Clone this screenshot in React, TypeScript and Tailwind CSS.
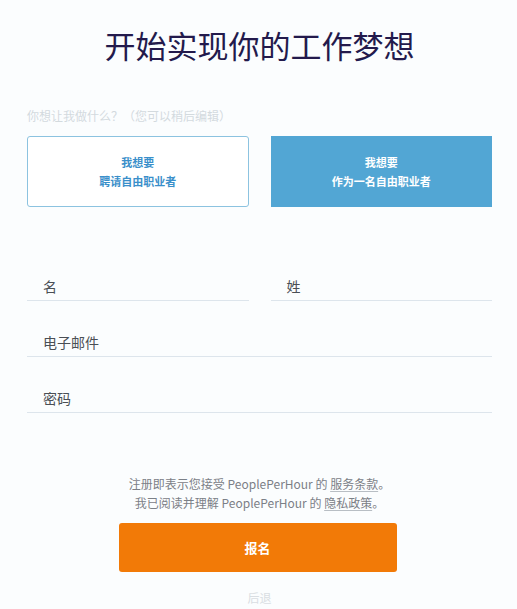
import React from 'react'

const font = { fontFamily: '"Noto Sans CJK SC", "Noto Sans", sans-serif' }

function Field({ label, className = '' }: { label: string; className?: string }) {
  return (
    <div className={`flex h-[28px] items-center border-b border-[#dde5ec] pl-4 text-[14px] text-[#4a4f55] ${className}`}>
      {label}
    </div>
  )
}

export default function App() {
  return (
    <div className="h-[609px] w-[517px] overflow-hidden bg-[#fbfdfe]" style={font}>
      <div className="pl-[27px] pr-[25px]">
        <h1 className="pt-[24px] text-center text-[31px] leading-[42px] font-normal text-[#231a4c]">
          开始实现你的工作梦想
        </h1>

        <p className="mt-[42px] text-[12px] leading-[16px] text-[#d3dade]">
          你想让我做什么？（您可以稍后编辑）
        </p>

        <div className="mt-[12px] grid grid-cols-2 gap-[22px]">
          <button className="flex h-[71px] flex-col items-center justify-center rounded-[3px] border border-[#8cc3e0] bg-white text-[11px] font-bold leading-[19px] text-[#3a8fca]">
            <span>我想要</span>
            <span>聘请自由职业者</span>
          </button>
          <button className="flex h-[71px] flex-col items-center justify-center bg-[#52a6d4] text-[11px] font-bold leading-[19px] text-white">
            <span>我想要</span>
            <span>作为一名自由职业者</span>
          </button>
        </div>

        <div className="mt-[66px] grid grid-cols-2 gap-[22px]">
          <Field label="名" />
          <Field label="姓" />
        </div>
        <Field label="电子邮件" className="mt-[28px]" />
        <Field label="密码" className="mt-[28px]" />

        <div className="mt-[61px] text-center text-[12px] leading-[19px] text-[#7b8087]">
          <p>
            注册即表示您接受 PeoplePerHour 的 <span className="underline decoration-[#b8bec4] underline-offset-2">服务条款</span>。
          </p>
          <p>
            我已阅读并理解 PeoplePerHour 的 <span className="underline decoration-[#b8bec4] underline-offset-2">隐私政策</span>。
          </p>
        </div>

        <div className="mt-[11px] flex justify-center pr-[4px]">
          <button className="h-[49px] w-[278px] rounded-[3px] bg-[#f27a07] text-[13px] font-bold text-white">
            报名
          </button>
        </div>

        <p className="mt-[17px] text-center text-[12px] text-[#d9dee2]">后退</p>
      </div>
    </div>
  )
}
